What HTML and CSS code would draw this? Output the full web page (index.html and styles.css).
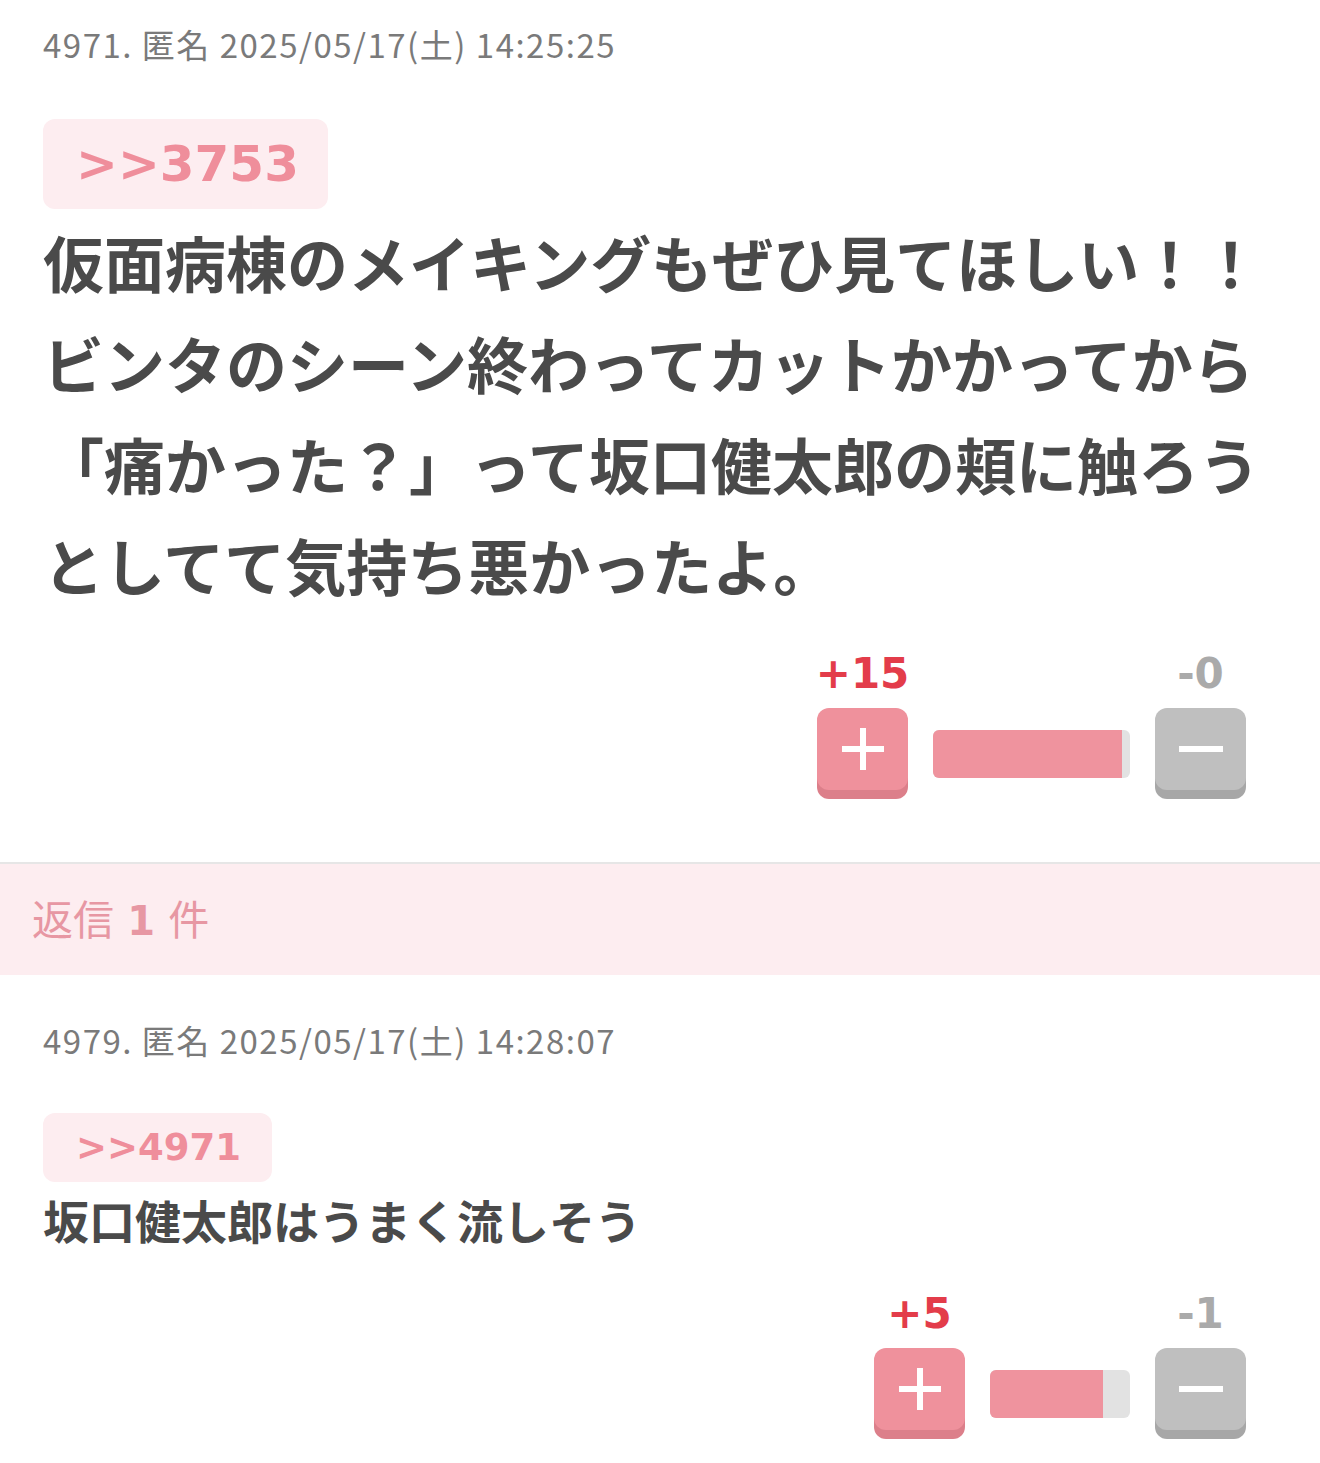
FILE: index.html
```html
<!DOCTYPE html>
<html lang="ja">
<head>
  <meta charset="UTF-8">
  <meta name="viewport" content="width=device-width, initial-scale=1.0">
  <title>コメント</title>
  <link rel="stylesheet" href="styles.css">
</head>
<body>
  <article class="post post-first">
    <div class="meta">4971. 匿名 2025/05/17(土) 14:25:25</div>
    <a class="anchor anchor-large">&gt;&gt;3753</a>
    <p class="body body-large">仮面病棟のメイキングもぜひ見てほしい！！ビンタのシーン終わってカットかかってから「痛かった？」って坂口健太郎の頬に触ろうとしてて気持ち悪かったよ。</p>
    <div class="vote">
      <div class="vote-col">
        <span class="count count-plus">+15</span>
        <button class="btn btn-plus" aria-label="プラス">
          <svg width="44" height="44" viewBox="0 0 44 44"><path d="M22 1v42M1 22h42" stroke="#fff" stroke-width="6"/></svg>
        </button>
      </div>
      <div class="bar bar-wide"><div class="fill" style="width: 96%"></div></div>
      <div class="vote-col">
        <span class="count count-minus">-0</span>
        <button class="btn btn-minus" aria-label="マイナス">
          <svg width="46" height="44" viewBox="0 0 46 44"><path d="M1 22h44" stroke="#fff" stroke-width="6"/></svg>
        </button>
      </div>
    </div>
  </article>

  <div class="replies">返信 <b>1</b> 件</div>

  <article class="post post-reply">
    <div class="meta">4979. 匿名 2025/05/17(土) 14:28:07</div>
    <a class="anchor anchor-small">&gt;&gt;4971</a>
    <p class="body body-small">坂口健太郎はうまく流しそう</p>
    <div class="vote">
      <div class="vote-col">
        <span class="count count-plus">+5</span>
        <button class="btn btn-plus" aria-label="プラス">
          <svg width="44" height="44" viewBox="0 0 44 44"><path d="M22 1v42M1 22h42" stroke="#fff" stroke-width="6"/></svg>
        </button>
      </div>
      <div class="bar bar-narrow"><div class="fill" style="width: 81%"></div></div>
      <div class="vote-col">
        <span class="count count-minus">-1</span>
        <button class="btn btn-minus" aria-label="マイナス">
          <svg width="46" height="44" viewBox="0 0 46 44"><path d="M1 22h44" stroke="#fff" stroke-width="6"/></svg>
        </button>
      </div>
    </div>
  </article>
</body>
</html>
```

FILE: styles.css
```css
* {
  margin: 0;
  padding: 0;
  box-sizing: border-box;
}

body {
  background-color: #fff;
  color: #4a4a4a;
  font-family: "Noto Sans CJK JP", "Noto Sans", sans-serif;
}

.post {
  padding: 0 43px;
}

.post-first {
  padding-top: 20px;
  padding-bottom: 72px;
}

.post-reply {
  padding-top: 41px;
  padding-bottom: 23px;
}

.meta {
  font-size: 33px;
  line-height: 48px;
  letter-spacing: 1.5px;
  color: #7a7a7a;
  margin-bottom: 51px;
}

.post-reply .meta {
  margin-bottom: 49px;
}

.anchor {
  display: inline-block;
  background-color: #fdedf0;
  color: #ef8e9b;
  font-family: "DejaVu Sans", Verdana, sans-serif;
  font-weight: bold;
  border-radius: 12px;
  padding: 0 33px;
}

.anchor-large {
  font-size: 50px;
  line-height: 90px;
  width: 285px;
}

.anchor-small {
  font-size: 37px;
  line-height: 69px;
  width: 229px;
}

.body {
  font-weight: bold;
  color: #4a4a4a;
}

.body-large {
  font-size: 61px;
  line-height: 101px;
  margin-top: 2px;
}

.body-small {
  font-size: 46px;
  line-height: 68px;
  margin-top: 3px;
}

.vote {
  display: flex;
  justify-content: flex-end;
  align-items: flex-end;
  gap: 25px;
  padding-right: 31px;
  margin-top: 34px;
}

.post-reply .vote {
  margin-top: 36px;
}

.vote-col {
  display: flex;
  flex-direction: column;
  align-items: center;
  width: 91px;
}

.count {
  font-family: "DejaVu Sans", Verdana, sans-serif;
  font-weight: bold;
  font-size: 42px;
  line-height: 50px;
  margin-bottom: 9px;
  white-space: nowrap;
}

.count-plus {
  color: #e33c4a;
}

.count-minus {
  color: #aaaaaa;
}

.btn {
  width: 91px;
  height: 82px;
  border: none;
  border-radius: 12px;
  display: flex;
  align-items: center;
  justify-content: center;
}

.btn-plus {
  background-color: #ef919c;
  box-shadow: 0 9px 0 #dc7f8a;
}

.btn-minus {
  background-color: #bfbfbf;
  box-shadow: 0 9px 0 #a7a7a7;
}

.bar {
  height: 48px;
  border-radius: 6px;
  background-color: #e2e2e2;
  overflow: hidden;
  margin-bottom: 12px;
}

.bar-wide {
  width: 197px;
}

.bar-narrow {
  width: 140px;
}

.fill {
  height: 100%;
  background-color: #ef939e;
}

.replies {
  border-top: 2px solid #e6e6e6;
  background-color: #fdedf0;
  color: #e797a3;
  font-size: 41px;
  line-height: 107px;
  padding-left: 32px;
  word-spacing: 4px;
}

.replies b {
  font-family: "DejaVu Sans", Verdana, sans-serif;
  font-size: 40px;
}
```
